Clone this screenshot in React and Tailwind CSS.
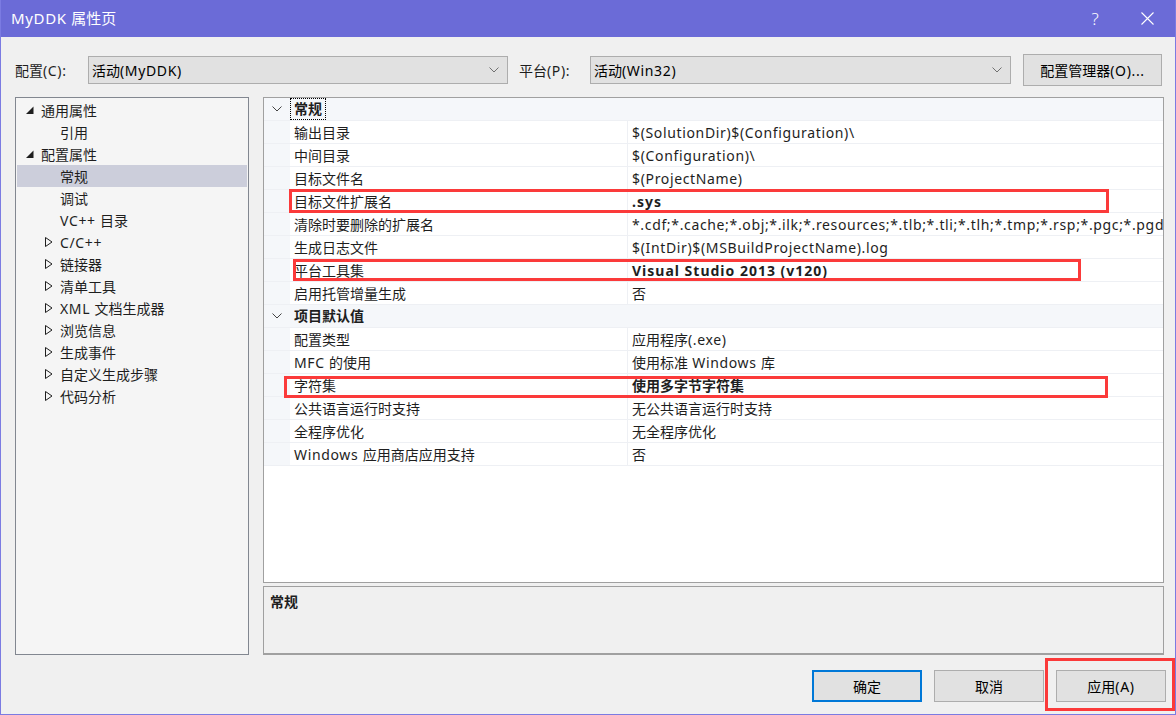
import React from "react";

const FONT = { fontFamily: '"Noto Sans", "Noto Sans CJK SC", sans-serif' };

// Latin runs are set a little looser so they match the width of the original UI font
function T({ children, bold }) {
  const parts = String(children).split(/([\u0020-\u024f]+)/).filter(Boolean);
  return (
    <>
      {parts.map((p, i) =>
        /^[\u0020-\u024f]+$/.test(p) ? (
          <span key={i} className={bold ? "tracking-[1px]" : "tracking-[0.65px]"}>
            {p}
          </span>
        ) : (
          <span key={i}>{p}</span>
        )
      )}
    </>
  );
}

const tree = [
  { label: "通用属性", level: 1, exp: "open" },
  { label: "引用", level: 2 },
  { label: "配置属性", level: 1, exp: "open" },
  { label: "常规", level: 2, selected: true },
  { label: "调试", level: 2 },
  { label: "VC++ 目录", level: 2 },
  { label: "C/C++", level: 2, exp: "closed" },
  { label: "链接器", level: 2, exp: "closed" },
  { label: "清单工具", level: 2, exp: "closed" },
  { label: "XML 文档生成器", level: 2, exp: "closed" },
  { label: "浏览信息", level: 2, exp: "closed" },
  { label: "生成事件", level: 2, exp: "closed" },
  { label: "自定义生成步骤", level: 2, exp: "closed" },
  { label: "代码分析", level: 2, exp: "closed" },
];

const groups = [
  {
    title: "常规",
    focused: true,
    rows: [
      ["输出目录", "$(SolutionDir)$(Configuration)\\"],
      ["中间目录", "$(Configuration)\\"],
      ["目标文件名", "$(ProjectName)"],
      ["目标文件扩展名", ".sys", true],
      ["清除时要删除的扩展名", "*.cdf;*.cache;*.obj;*.ilk;*.resources;*.tlb;*.tli;*.tlh;*.tmp;*.rsp;*.pgc;*.pgd;*.meta;*.tlog;*.manifest;*.res"],
      ["生成日志文件", "$(IntDir)$(MSBuildProjectName).log"],
      ["平台工具集", "Visual Studio 2013 (v120)", true],
      ["启用托管增量生成", "否"],
    ],
  },
  {
    title: "项目默认值",
    rows: [
      ["配置类型", "应用程序(.exe)"],
      ["MFC 的使用", "使用标准 Windows 库"],
      ["字符集", "使用多字节字符集", true],
      ["公共语言运行时支持", "无公共语言运行时支持"],
      ["全程序优化", "无全程序优化"],
      ["Windows 应用商店应用支持", "否"],
    ],
  },
];

function Chevron({ className }) {
  return (
    <svg width="10" height="6" viewBox="0 0 10 6" className={className}>
      <polyline points="0.5,0.5 5,5 9.5,0.5" fill="none" stroke="currentColor" strokeWidth="1" />
    </svg>
  );
}

function Dropdown({ value, width }) {
  return (
    <div className={`flex h-[28px] items-center justify-between border border-[#adadad] bg-[#e1e1e1] pl-[3px] pr-[8px] ${width}`}>
      <span className="text-[14px] text-black">
        <T>{value}</T>
      </span>
      <Chevron className="text-[#707070]" />
    </div>
  );
}

function TreeItem({ item }) {
  return (
    <div className={`flex h-[22px] items-center ${item.selected ? "bg-[#cccedb]" : ""}`}>
      {item.level === 1 ? (
        <div className="flex items-center pl-[8px]">
          <svg width="9" height="9" viewBox="0 0 9 9" className="mr-[7px] mt-[1px]">
            <polygon points="8.5,0.5 8.5,8 1,8" fill="#1e1e1e" />
          </svg>
          <span>{item.label}</span>
        </div>
      ) : (
        <div className="flex items-center pl-[28px]">
          <span className="flex w-[15px] items-center">
            {item.exp === "closed" && (
              <svg width="8" height="10" viewBox="0 0 8 10">
                <polygon points="0.5,0.5 7,5 0.5,9.5" fill="none" stroke="#1e1e1e" strokeWidth="1" />
              </svg>
            )}
          </span>
          <span>
            <T>{item.label}</T>
          </span>
        </div>
      )}
    </div>
  );
}

function Category({ title, focused }) {
  return (
    <div className="flex h-[23px] items-center border-b border-[#eef0f4] bg-[#f5f7fa]">
      <div className="flex w-[26px] justify-center">
        <Chevron className="text-[#444]" />
      </div>
      <span className={`px-[3px] font-bold leading-[20px] ${focused ? "border border-dotted border-black" : "border border-transparent"}`}>
        {title}
      </span>
    </div>
  );
}

function PropRow({ name, value, bold }) {
  return (
    <div className="flex h-[23px] border-b border-[#eef0f4]">
      <div className="w-[26px] shrink-0 bg-[#f5f7fa]" />
      <div className="flex w-[338px] shrink-0 items-center border-r border-[#eef0f4] bg-white pl-[4px]">
        <span className="whitespace-nowrap">
          <T>{name}</T>
        </span>
      </div>
      <div className="flex min-w-0 flex-1 items-center overflow-hidden bg-white pl-[4px]">
        <span className={`whitespace-nowrap ${bold ? "font-bold" : ""}`}>
          <T bold={bold}>{value}</T>
        </span>
      </div>
    </div>
  );
}

export default function App() {
  return (
    <div style={FONT} className="flex h-[715px] w-[1176px] flex-col overflow-hidden border-x border-b border-[#7b7be2] bg-[#f0f0f0] text-[14px] text-[#1e1e1e]">
      {/* Title bar */}
      <div className="-mx-px flex h-[37px] shrink-0 items-center justify-between bg-[#6b6bd7] pl-[11px] text-white">
        <span className="text-[15px]">
          <T>MyDDK 属性页</T>
        </span>
        <div className="flex items-center">
          <span className="w-[46px] text-center text-[17px] font-light">?</span>
          <span className="flex w-[58px] justify-center">
            <svg width="13" height="13" viewBox="0 0 13 13">
              <path d="M0.5 0.5 L12.5 12.5 M12.5 0.5 L0.5 12.5" stroke="white" strokeWidth="1.1" />
            </svg>
          </span>
        </div>
      </div>

      {/* Config row */}
      <div className="mt-[17px] flex h-[32px] items-center pl-[14px]">
        <span className="w-[73px]">
          <T>配置(C):</T>
        </span>
        <Dropdown value="活动(MyDDK)" width="w-[420px]" />
        <span className="ml-[11px] w-[71px]">
          <T>平台(P):</T>
        </span>
        <Dropdown value="活动(Win32)" width="w-[421px]" />
        <button className="ml-[12px] h-[32px] w-[139px] border border-[#adadad] bg-[#e1e1e1] text-[14px] text-black">
          <T>配置管理器(O)...</T>
        </button>
      </div>

      {/* Main area */}
      <div className="mt-[11px] flex h-[558px] pl-[14px]">
        <div className="h-full w-[234px] border border-[#828790] bg-[#f5f5f5] px-px pt-px">
          {tree.map((t) => (
            <TreeItem key={t.label} item={t} />
          ))}
        </div>

        <div className="ml-[14px] flex w-[901px] flex-col">
          <div className="relative h-[487px] border border-[#a0a0a0] bg-white">
            {groups.map((g) => (
              <div key={g.title}>
                <Category title={g.title} focused={g.focused} />
                {g.rows.map(([n, v, b]) => (
                  <PropRow key={n} name={n} value={v} bold={b} />
                ))}
              </div>
            ))}
            {/* annotation boxes */}
            <div className="absolute left-[25px] top-[91px] h-[24px] w-[820px] border-[3px] border-[#fb3a3a]" />
            <div className="absolute left-[29px] top-[161px] h-[22px] w-[788px] border-[3px] border-[#fb3a3a]" />
            <div className="absolute left-[20px] top-[278px] h-[22px] w-[824px] border-[3px] border-[#fb3a3a]" />
          </div>
          <div className="mt-[3px] h-[69px] border border-b-2 border-[#a0a0a0] bg-[#f0f0f0] px-[6px] pt-[4px]">
            <span className="font-bold">常规</span>
          </div>
        </div>
      </div>

      {/* Buttons */}
      <div className="relative mt-[15px] flex h-[32px] justify-end gap-[12px] pr-[9px]">
        <button className="h-[32px] w-[110px] border-2 border-[#0078d7] bg-[#e1e1e1] text-black">确定</button>
        <button className="h-[32px] w-[110px] border border-[#adadad] bg-[#e1e1e1] text-black">取消</button>
        <button className="h-[32px] w-[110px] border border-[#adadad] bg-[#e1e1e1] text-black">
          <T>应用(A)</T>
        </button>
        <div className="absolute right-0 top-[-12px] h-[53px] w-[130px] border-[3px] border-[#fb3a3a]" />
      </div>
    </div>
  );
}
